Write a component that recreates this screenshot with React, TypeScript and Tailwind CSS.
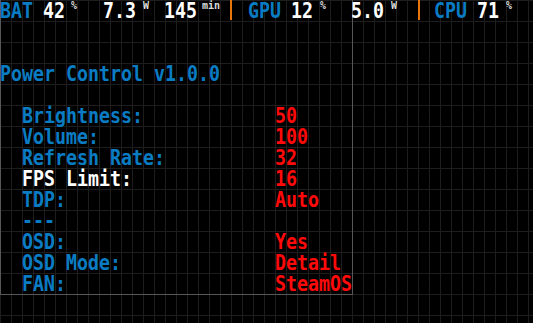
import React from 'react';

type Row = { label: string; value?: string; active?: boolean };

const rows: Row[] = [
  { label: 'Brightness:', value: '50' },
  { label: 'Volume:', value: '100' },
  { label: 'Refresh Rate:', value: '32' },
  { label: 'FPS Limit:', value: '16', active: true },
  { label: 'TDP:', value: 'Auto' },
  { label: '---' },
  { label: 'OSD:', value: 'Yes' },
  { label: 'OSD Mode:', value: 'Detail' },
  { label: 'FAN:', value: 'SteamOS' },
];

function Big({ w, className, children }: { w: string; className?: string; children: React.ReactNode }) {
  return <span className={`${w} shrink-0 scale-y-[1.2] whitespace-pre ${className ?? 'text-white'}`}>{children}</span>;
}

function Unit({ w, children }: { w: string; children: React.ReactNode }) {
  return <span className={`${w} shrink-0 self-start pt-[1px] text-[10px] leading-[10px] text-[#dcdcdc] whitespace-pre`}>{children}</span>;
}

function Sep({ w }: { w: string }) {
  return (
    <span className={`${w} shrink-0 h-[20px]`}>
      <span className="block w-[2px] h-[20px] bg-[#e8760c]" />
    </span>
  );
}

export default function App() {
  return (
    <div className="relative h-screen w-full overflow-hidden bg-black bg-[linear-gradient(to_right,#1d1d1d_1px,transparent_1px),linear-gradient(to_bottom,#1d1d1d_1px,transparent_1px)] bg-size-[11px_21px] font-['DejaVu_Sans_Mono',monospace] font-bold text-[18.27px] leading-[21px]">
      <div className="w-[353px] h-[295px] border-r border-b border-[#575757] shadow-[inset_1px_0_0_#575757] pt-[63px]">
        <div className="h-[21px] scale-y-[1.2] text-[#0a7cc4] whitespace-pre">Power Control v1.0.0</div>
        <div className="mt-[21px]">
          {rows.map((row) => (
            <div key={row.label} className="flex h-[21px] scale-y-[1.2] whitespace-pre">
              <span className={`w-[275px] shrink-0 pl-[22px] ${row.active ? 'text-white' : 'text-[#0a7cc4]'}`}>{row.label}</span>
              <span className="text-[#ff0a0a]">{row.value}</span>
            </div>
          ))}
        </div>
      </div>

      <div className="absolute top-0 left-0 flex items-start h-[21px]">
        <Big w="w-[43px]" className="text-[#0a7cc4]">BAT</Big>
        <Big w="w-[28px]">42</Big>
        <Unit w="w-[32px]">%</Unit>
        <Big w="w-[40px]">7.3</Big>
        <Unit w="w-[21px]">W</Unit>
        <Big w="w-[38px]">145</Big>
        <Unit w="w-[28px]">min</Unit>
        <Sep w="w-[18px]" />
        <Big w="w-[43px]" className="text-[#0a7cc4]">GPU</Big>
        <Big w="w-[29px]">12</Big>
        <Unit w="w-[31px]">%</Unit>
        <Big w="w-[40px]">5.0</Big>
        <Unit w="w-[27px]">W</Unit>
        <Sep w="w-[16px]" />
        <Big w="w-[43px]" className="text-[#0a7cc4]">CPU</Big>
        <Big w="w-[29px]">71</Big>
        <Unit w="w-[20px]">%</Unit>
      </div>
    </div>
  );
}
